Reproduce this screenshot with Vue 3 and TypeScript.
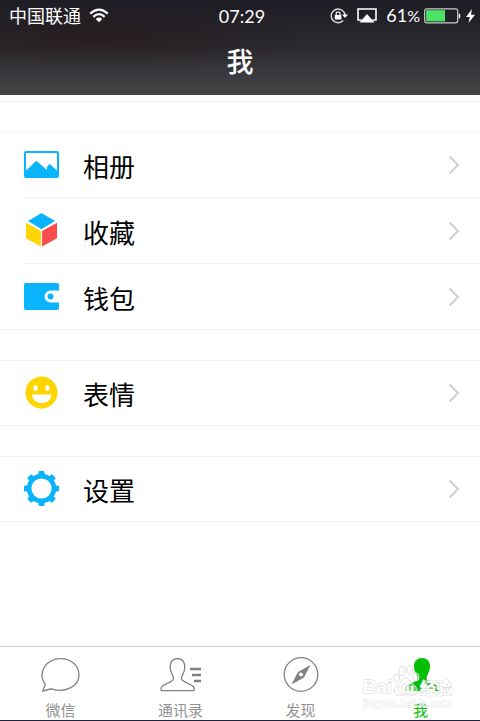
<script setup lang="ts">
import { ref } from 'vue'

type IconName = 'album' | 'cube' | 'wallet' | 'smile' | 'gear'
interface Row { label: string; icon: IconName }

const groups: Row[][] = [
  [
    { label: '相册', icon: 'album' },
    { label: '收藏', icon: 'cube' },
    { label: '钱包', icon: 'wallet' },
  ],
  [{ label: '表情', icon: 'smile' }],
  [{ label: '设置', icon: 'gear' }],
]

const tabs = ['微信', '通讯录', '发现', '我']
const active = ref('我')
const teeth = [0, 45, 90, 135, 180, 225, 270, 315]
</script>

<template>
  <div class="screen">
    <header class="header">
      <div class="status">
        <div class="carrier">
          <span>中国联通</span>
          <svg viewBox="0 0 20 15" width="20" height="15">
            <g fill="none" stroke="#fff" stroke-width="2.2">
              <path d="M1.2 5.6Q10-2.4 18.8 5.6" />
              <path d="M4.3 8.9Q10 3.4 15.7 8.9" />
            </g>
            <path d="M10 14.2L6.700 10.900Q10 8.200 13.300 10.900Z" fill="#fff" />
          </svg>
        </div>
        <time class="clock">07:29</time>
        <div class="indicators">
          <svg viewBox="0 0 18 16" width="18" height="16">
            <path d="M13.2 3.2A6.900 6.900 0 1 0 13.200 12.600M13.200 3.200Q15 5 15 7" fill="none" stroke="#ddd" stroke-width="1.400" />
            <path d="M12 6.500H18L15 10Z" fill="#fff" />
            <rect x="4.800" y="7" width="6.600" height="4.600" rx=".5" fill="#fff" />
            <path d="M6.200 7.500V5.700a1.900 1.900 0 0 1 3.800 0v1.800" fill="none" stroke="#fff" stroke-width="1.200" />
          </svg>
          <svg class="airplay" viewBox="0 0 20 15" width="20" height="15">
            <path d="M4.500 12H1V1H19V12H15.500" fill="none" stroke="#fff" stroke-width="1.600" />
            <path d="M10 6L17.500 14.500H2.500Z" fill="#fff" />
          </svg>
          <span class="percent">61<small>%</small></span>
          <svg viewBox="0 0 38 16" width="38" height="16">
            <rect x=".7" y=".8" width="33" height="14" rx="2" fill="none" stroke="#ccc" stroke-width="1.200" />
            <rect x="2.200" y="2.200" width="18.800" height="11.200" fill="#4be467" />
            <path d="M34.800 5Q38 8 34.800 11Z" fill="#fff" />
          </svg>
          <svg viewBox="0 0 9 14" width="9" height="14">
            <path d="M6 0L0 8H3.800L2.500 14L9 5.800H5Z" fill="#fff" />
          </svg>
        </div>
      </div>
      <h1>我</h1>
    </header>

    <main>
      <ul v-for="(group, i) in groups" :key="i" class="group">
        <li v-for="row in group" :key="row.label">
          <button type="button" class="row">
            <svg class="icon" viewBox="0 0 36 36" width="36" height="36">
              <template v-if="row.icon === 'album'">
                <rect x="0" y="4" width="35" height="27" rx="2" fill="#09b4fd" />
                <path d="M2 6H33V23.500L25.700 17L22.800 20.300L23 23L12.300 13.700L2 23.500Z" fill="#fff" />
              </template>
              <template v-else-if="row.icon === 'cube'">
                <path d="M17.500 0L31 8L17.500 16.200L4 8Z" fill="#09b4fd" />
                <path d="M2 9.700L16.900 18V33.500L2 25.200Z" fill="#ffd500" />
                <path d="M33 9.700L18.100 18V33.500L33 25.200Z" fill="#fd4c4c" />
              </template>
              <template v-else-if="row.icon === 'wallet'">
                <path d="M2 4H33Q35 4 35 6V11.500H26.500A6 6 0 0 0 26.500 23.500H35V29Q35 31 33 31H2Q0 31 0 29V6Q0 4 2 4Z" fill="#09b4fd" />
                <circle cx="26.500" cy="17.500" r="3" fill="#09b4fd" />
              </template>
              <template v-else-if="row.icon === 'smile'">
                <circle cx="17.500" cy="17.500" r="16" fill="#ffd500" />
                <ellipse cx="11.500" cy="13" rx="2.200" ry="2.800" fill="#fff" />
                <ellipse cx="23.500" cy="13" rx="2.200" ry="2.800" fill="#fff" />
                <path d="M8 19.500H27.500C27 31 8.500 31 8 19.500Z" fill="#fff" />
              </template>
              <template v-else>
                <circle cx="17.500" cy="17.500" r="12.400" fill="none" stroke="#09b4fd" stroke-width="4.600" />
                <rect v-for="angle in teeth" :key="angle" x="14.500" y="0" width="6" height="5.500" rx="1.200" fill="#09b4fd" :transform="`rotate(${angle} 17.5 17.5)`" />
              </template>
            </svg>
            <span class="label">{{ row.label }}</span>
            <svg viewBox="0 0 12 20" width="12" height="20">
              <path d="M1.500 1.500L10 10L1.500 18.500" fill="none" stroke="#d0d0d3" stroke-width="2" />
            </svg>
          </button>
        </li>
      </ul>
    </main>

    <nav class="tabs">
      <button v-for="tab in tabs" :key="tab" type="button" class="tab" :class="{ active: tab === active }" @click="active = tab">
        <svg viewBox="0 0 44 38" width="44" height="38" fill="none" stroke="currentColor" stroke-width="1.300">
          <path v-if="tab === '微信'" d="M4.800 35L7.200 28.400C-1.500 16 9 2.600 22.500 2.600C33 2.600 41 9.500 41 18.700C41 30.500 27 37.500 13.500 32.800Z" />
          <template v-else-if="tab === '通讯录'">
            <path d="M19.500 2.600C14 2.600 11.700 7 12.200 12C12.500 16 14.300 18.500 15.200 20.500C16.500 24.500 14 25 10 27C5 29.500 3 30 3 33.500Q3 34.700 4.500 34.700H35Q36.300 34.700 36.300 33.500C36.300 30 34 29.500 29 27C25 25 22.500 24 23.800 20.500C24.700 18.500 26.500 16 26.800 12C27.300 7 25 2.600 19.500 2.600Z" />
            <path d="M32 13H43M34 19H43M36 25H43" stroke-width="2.400" />
          </template>
          <template v-else-if="tab === '发现'">
            <circle cx="23" cy="18.500" r="16.800" />
            <path d="M32.500 9L26 21.500L13.500 28.500L20 16Z" fill="currentColor" stroke="none" />
            <circle cx="23" cy="18.500" r="2" fill="#fff" stroke="none" />
          </template>
          <path v-else d="M24 2C18 2 15.500 6.500 16 11.500C16.500 16 18.500 18 19.300 21C20 25 17 25.500 13 27.500C8 30 7 30.500 7 35H41C41 30.500 40 30 35 27.500C31 25.500 28 25 28.700 21C29.500 18 31.500 16 32 11.500C32.500 6.500 30 2 24 2Z" fill="currentColor" stroke="none" />
        </svg>
        <span>{{ tab }}</span>
      </button>
      <div class="watermark" aria-hidden="true">
        <div class="brand">
          <span>Bai</span>
          <svg viewBox="0 0 28 32" width="28" height="32">
            <g fill="#fff" fill-opacity=".35" stroke="#d8d8d8" stroke-width="1">
              <ellipse cx="4.500" cy="13" rx="3" ry="4" />
              <ellipse cx="10" cy="6" rx="3" ry="4.500" />
              <ellipse cx="18" cy="5" rx="3" ry="4.500" />
              <ellipse cx="24" cy="12" rx="3" ry="4" />
              <path d="M14 13C18 13 19 18 23 21C29 27 23 32 18 30Q14 29 10 30C5 32-1 27 5 21C9 18 10 13 14 13Z" />
            </g>
            <text x="14" y="28" text-anchor="middle" class="du">du</text>
          </svg>
          <span class="cjk">经验</span>
        </div>
        <div class="site">jingyan.baidu.com</div>
      </div>
    </nav>
  </div>
</template>

<style>
body { margin: 0; background: #fff; }
</style>

<style scoped>
.screen {
  display: flex;
  flex-direction: column;
  min-height: 100vh;
  box-sizing: border-box;
  border-bottom: 1px solid #20223c;
  font-family: "Noto Sans", "Noto Sans CJK SC", sans-serif;
  background: #fff;
}
button { border: 0; padding: 0; background: none; font: inherit; color: inherit; cursor: pointer; }
.header {
  height: 95px;
  color: #fff;
  background:
    radial-gradient(ellipse at 20% 40%, rgba(36, 16, 16, .4), transparent 40%),
    linear-gradient(#1e1c24, #2b2a2f 50%, #454447);
}
.status {
  display: grid;
  grid-template-columns: 1fr auto 1fr;
  align-items: center;
  height: 30px;
  padding: 0 5px 0 9px;
  font-size: 18px;
  line-height: 30px;
}
.carrier { display: flex; align-items: center; gap: 8px; }
.clock, .percent { font-family: Lato, sans-serif; }
.indicators { display: flex; align-items: center; justify-content: flex-end; gap: 4px; }
.airplay { margin: 0 5px; }
.percent small { font-size: 16px; }
h1 { margin: 0; font-size: 27px; font-weight: 500; line-height: 64px; text-align: center; }
main { flex: 1; padding-top: 6px; }
main::before { content: ""; display: block; height: 30px; border-top: 1px solid #ececee; }
.group { list-style: none; margin: 0 0 30px; padding: 0; border: solid #f3f3f5; border-width: 1px 0; }
.row { display: flex; align-items: center; width: 100%; height: 64px; padding: 0 20px 0 24px; text-align: left; }
li + li { border-top: 1px solid transparent; border-image: linear-gradient(90deg, transparent 24px, #f3f3f5 24px) 1; }
li + li .row { height: 65px; }
.icon { flex: none; margin-right: 23px; }
.label { flex: 1; padding-top: 4px; color: #000; font-size: 26px; line-height: 36px; }
.tabs {
  position: relative;
  display: grid;
  grid-template-columns: repeat(4, 1fr);
  height: 73px;
  border-top: 1px solid #c9c9d0;
}
.tab { display: flex; flex-direction: column; align-items: center; padding-top: 9px; color: #808085; }
.tab span { padding: 4px 0 0 1px; font-size: 15px; line-height: 24px; color: #929292; }
.tab.active, .tab.active span { color: #05bf05; }
.watermark { position: absolute; right: 28px; bottom: 10px; color: #fff; pointer-events: none; }
.brand { display: flex; align-items: flex-end; height: 32px; font: 700 19px/20px "Liberation Sans", sans-serif; -webkit-text-stroke: 1px #d8d8d8; paint-order: stroke fill; }
.cjk { font: 700 16px/20px "Noto Sans CJK SC", sans-serif; }
.du { font: 700 13px "Liberation Sans", sans-serif; fill: #fff; stroke: #d8d8d8; stroke-width: 1px; -webkit-text-stroke: 0; }
.site { font: 11px/13px "Liberation Sans", sans-serif; -webkit-text-stroke: 1px #ddd; paint-order: stroke fill; opacity: .6; }
</style>
